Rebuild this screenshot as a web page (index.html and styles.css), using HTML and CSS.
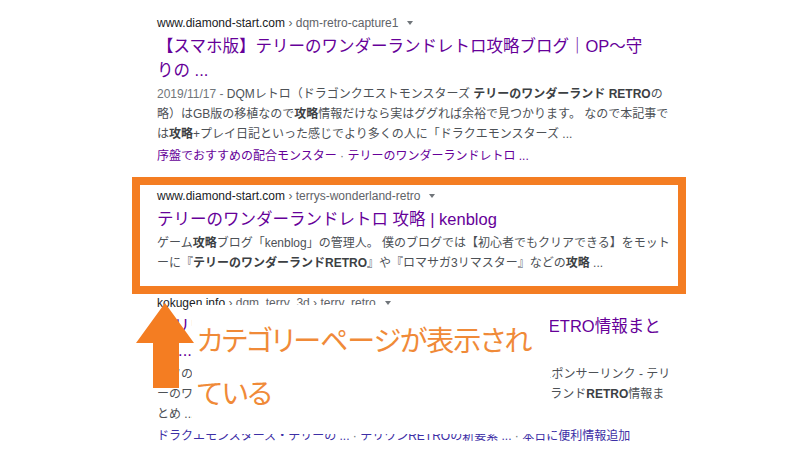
FILE: index.html
```html
<!DOCTYPE html>
<html lang="ja">

<head>
    <meta charset="UTF-8">
    <meta name="viewport" content="width=device-width, initial-scale=1.0">
    <title>テリーのワンダーランドレトロ 攻略 - 検索結果</title>
    <link rel="stylesheet" href="styles.css">
</head>

<body>
    <div class="page">

        <div class="serp">
            <div class="result">
                <div class="cite">www.diamond-start.com <span class="crumb">› dqm-retro-capture1</span><span class="caret"></span></div>
                <a class="title" href="#">【スマホ版】テリーのワンダーランドレトロ攻略ブログ｜OP～守<br>りの ...</a>
                <div class="snippet">
                    <span class="date">2019/11/17 - </span>DQMレトロ（ドラゴンクエストモンスターズ <b>テリーのワンダーランド RETRO</b>の<br>
                    略）はGB版の移植なので<b>攻略</b>情報だけなら実はググれば余裕で見つかります。 なので本記事で<br>
                    は<b>攻略</b>+プレイ日記といった感じでより多くの人に「ドラクエモンスターズ ...
                </div>
                <div class="sitelinks">
                    <a href="#">序盤でおすすめの配合モンスター</a><span class="sep"> · </span><a href="#">テリーのワンダーランドレトロ ...</a>
                </div>
            </div>

            <!-- the one we want to point at -->
            <div class="result marked">
                <div class="cite">www.diamond-start.com <span class="crumb">› terrys-wonderland-retro</span><span class="caret"></span></div>
                <a class="title" href="#">テリーのワンダーランドレトロ 攻略 | kenblog</a>
                <div class="snippet">
                    ゲーム<b>攻略</b>ブログ「kenblog」の管理人。 僕のブログでは【初心者でもクリアできる】をモット<br>
                    ーに『<b>テリーのワンダーランドRETRO</b>』や『ロマサガ3リマスター』などの<b>攻略</b> ...
                </div>
            </div>

            <div class="result last">
                <div class="cite">kokugen.info <span class="crumb">› dqm_terry_3d › terry_retro</span><span class="caret"></span></div>
                <a class="title" href="#">テリワン攻略 | ドラクエモンスターズ テリーのワンRETRO情報まと<br>め ...</a>
                <div class="snippet">
                    ークの配合表や攻略情報、おすすめモンスターなどをまとめています。スポンサーリンク - テリ<br>
                    ーのワンダーランド<b>RETRO</b>の攻略情報を毎日掲載中。 テリーのワンダーランド<b>RETRO</b>情報ま<br>
                    とめ ...
                </div>
                <div class="sitelinks blue">
                    <a href="#">ドラクエモンスターズ・テリーの ...</a><span class="sep"> · </span><a href="#">テリワンRETROの新要素 ...</a><span class="sep"> · </span><a href="#">本日に便利情報追加</a>
                </div>
            </div>
        </div>

        <div class="note">
            カテゴリーページが表示され<br>ている
        </div>

        <svg class="arrow" width="60" height="88" viewBox="0 0 60 88">
            <polygon points="29,1 58,41 43,41 43,86 17,86 17,41 0,41" fill="#f47d22" />
        </svg>

    </div>
</body>

</html>
```

FILE: styles.css
```css
* {
    box-sizing: content-box;
}

body {
    margin: 0;
    background-color: #fff;
    font-family: "Liberation Sans", "Noto Sans CJK JP", sans-serif;
}

.page {
    position: relative;
    width: 800px;
    height: 450px;
    overflow: hidden;
}

.serp {
    padding: 12px 0 0 157px;
    width: 560px;
}

.result {
    margin-top: 2px;
}

.result.last {
    margin-top: 0;
}

.cite {
    font-size: 12px;
    line-height: 18px;
    color: #202124;
    white-space: nowrap;
}

.crumb {
    color: #5f6368;
}

.caret {
    display: inline-block;
    margin-left: 9px;
    vertical-align: 2px;
    border-left: 3.5px solid transparent;
    border-right: 3.5px solid transparent;
    border-top: 4px solid #70757a;
}

.title {
    display: block;
    margin-top: 2px;
    font-size: 16.5px;
    line-height: 24px;
    color: #660099;
    text-decoration: none;
    white-space: nowrap;
}

.snippet {
    margin-top: 2px;
    font-size: 12px;
    line-height: 20px;
    color: #4d5156;
    white-space: nowrap;
}

.snippet b {
    color: #3c4043;
}

.date {
    color: #70757a;
}

.sitelinks {
    margin-top: 2px;
    font-size: 12px;
    line-height: 20px;
    white-space: nowrap;
}

.sitelinks a {
    color: #660099;
    text-decoration: none;
}

.sitelinks.blue a {
    color: #3d2fa6;
}

.sep {
    color: #70757a;
}

/* orange frame round the second result */
.marked {
    margin-top: 11px;
    margin-left: -25px;
    width: 513px;
    padding: 2px 8px 13px 17px;
    border: 8px solid #f47d22;
}

/* annotation */
.note {
    position: absolute;
    left: 192px;
    top: 305px;
    width: 353px;
    height: 121px;
    padding: 8px 0 0 5px;
    background-color: #fff;
    font-family: "Noto Sans CJK JP", sans-serif;
    font-feature-settings: "palt";
    font-size: 28px;
    letter-spacing: -1px;
    line-height: 53px;
    color: #f08a38;
    white-space: nowrap;
}

.arrow {
    position: absolute;
    left: 136px;
    top: 302px;
}
```
